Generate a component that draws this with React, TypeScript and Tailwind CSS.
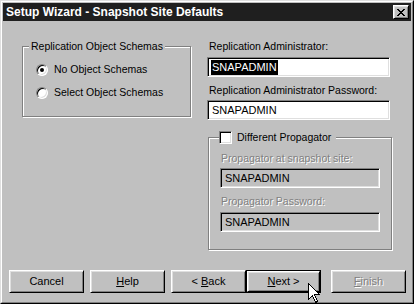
import type { ReactNode } from 'react';

const raised =
  'border border-t-white border-l-white border-r-black border-b-black shadow-[inset_1px_1px_0_#dfdfdf,inset_-1px_-1px_0_#808080]';
const sunken =
  'border border-t-[#808080] border-l-[#808080] border-r-white border-b-white shadow-[inset_1px_1px_0_#000,inset_-1px_-1px_0_#dfdfdf]';
const etched =
  'border border-[#808080] shadow-[inset_1px_1px_0_#fff,1px_1px_0_#fff]';
const grayText = 'text-[#808080] [text-shadow:1px_1px_0_#fff]';
const label = 'text-[10.5px] leading-[13px]';

function Button({ children, className = '', isDefault = false, disabled = false }: {
  children: ReactNode;
  className?: string;
  isDefault?: boolean;
  disabled?: boolean;
}) {
  return (
    <div className={`w-[75px] h-[23px] shrink-0 ${isDefault ? 'border border-black' : ''} ${className}`}>
      <div
        className={`${raised} w-full h-full bg-[#c0c0c0] flex items-center justify-center text-[11px] leading-none ${
          disabled ? grayText : 'text-black'
        }`}
      >
        {children}
      </div>
    </div>
  );
}

function Radio({ checked, text, className = '' }: { checked?: boolean; text: string; className?: string }) {
  return (
    <div className={`flex items-center h-[13px] ${className}`}>
      <div className={`w-[12px] h-[12px] rounded-full bg-white ${sunken} flex items-center justify-center`}>
        {checked && <div className="w-[4px] h-[4px] rounded-full bg-black" />}
      </div>
      <span className={`ml-[6px] ${label}`}>{text}</span>
    </div>
  );
}

function Field({ value, disabled = false, selected = false, className = '' }: {
  value: string;
  disabled?: boolean;
  selected?: boolean;
  className?: string;
}) {
  return (
    <div
      className={`${sunken} h-[20px] flex items-center text-[11px] pl-[3px] ${
        disabled ? 'bg-[#c0c0c0]' : 'bg-white'
      } ${className}`}
    >
      {selected ? (
        <span className="bg-black text-white px-px leading-[15px]">{value}</span>
      ) : (
        <span className="pl-px">{value}</span>
      )}
    </div>
  );
}

export default function App() {
  return (
    <div className="relative w-[414px] h-[304px] bg-[#c0c0c0] border border-[#dfdfdf] border-r-black border-b-black font-['Liberation_Sans',Arial,sans-serif] text-black select-none">
      <div className="h-full border border-white border-r-[#808080] border-b-[#808080] p-px flex flex-col">
        {/* Title bar */}
        <div className="h-[18px] bg-[#1f1f1f] flex items-center justify-between pl-[3px] pr-[2px]">
          <span className="text-white text-[12px] font-bold leading-none">Setup Wizard - Snapshot Site Defaults</span>
          <div className={`${raised} w-[16px] h-[14px] bg-[#c0c0c0] flex items-center justify-center`}>
            <svg width="8" height="7" viewBox="0 0 8 7" shapeRendering="crispEdges">
              <path
                d="M0 0h2v1H0zM6 0h2v1H6zM1 1h2v1H1zM5 1h2v1H5zM2 2h4v1H2zM3 3h2v1H3zM2 4h4v1H2zM1 5h2v1H1zM5 5h2v1H5zM0 6h2v1H0zM6 6h2v1H6z"
                fill="#000"
              />
            </svg>
          </div>
        </div>

        {/* Body */}
        <div className="flex flex-1">
          {/* Left group */}
          <fieldset className={`${etched} ml-[19px] mt-[19px] w-[169px] h-[77px] pl-[13px]`}>
            <legend className={`ml-[-7px] px-[2px] bg-[#c0c0c0] ${label}`}>Replication Object Schemas</legend>
            <Radio checked text="No Object Schemas" className="mt-[10px]" />
            <Radio text="Select Object Schemas" className="mt-[10px]" />
          </fieldset>

          {/* Right column */}
          <div className="ml-[16px] mt-[19px] w-[183px] flex flex-col">
            <div className={`${label} pl-[2px]`}>Replication Administrator:</div>
            <Field value="SNAPADMIN" selected className="mt-[4px]" />
            <div className={`${label} pl-[2px] mt-[7px]`}>Replication Administrator Password:</div>
            <Field value="SNAPADMIN" className="mt-[3px]" />

            <fieldset className={`${etched} ml-px mt-[11px] w-[184px] px-[11px] pb-[17px]`}>
              <legend className="ml-[-1px] pr-[5px] flex items-center h-[13px] bg-[#c0c0c0]">
                <span className={`${sunken} w-[13px] h-[13px] bg-white block`} />
                <span className={`ml-[5px] ${label}`}>Different Propagator</span>
              </legend>
              <div className={`${label} pl-px mt-[8px] ${grayText}`}>Propagator at snapshot site:</div>
              <Field value="SNAPADMIN" disabled className="mt-[3px]" />
              <div className={`${label} pl-px mt-[7px] ${grayText}`}>Propagator Password:</div>
              <Field value="SNAPADMIN" disabled className="mt-[4px]" />
            </fieldset>
          </div>
        </div>

        {/* Buttons */}
        <div className="flex ml-[6px] mb-[8px]">
          <Button>Cancel</Button>
          <Button className="ml-[6px]">
            <span className="underline">H</span>elp
          </Button>
          <Button className="ml-[6px]">
            &lt; <span className="underline ml-[3px]">B</span>ack
          </Button>
          <Button isDefault>
            <span className="underline">N</span>ext &gt;
          </Button>
          <Button className="ml-[10px]" disabled>
            <span className="underline">F</span>inish
          </Button>
        </div>
      </div>

      {/* Mouse cursor */}
      <svg className="absolute left-[307px] top-[282px]" width="13" height="20" viewBox="0 0 13 20" shapeRendering="crispEdges">
        <path d="M0.5 0.5 L0.5 16.5 L4.5 12.5 L7.5 19.5 L9.5 18.5 L6.5 11.5 L11.5 11.5 Z" fill="#fff" stroke="#000" strokeWidth="1" />
      </svg>
    </div>
  );
}
